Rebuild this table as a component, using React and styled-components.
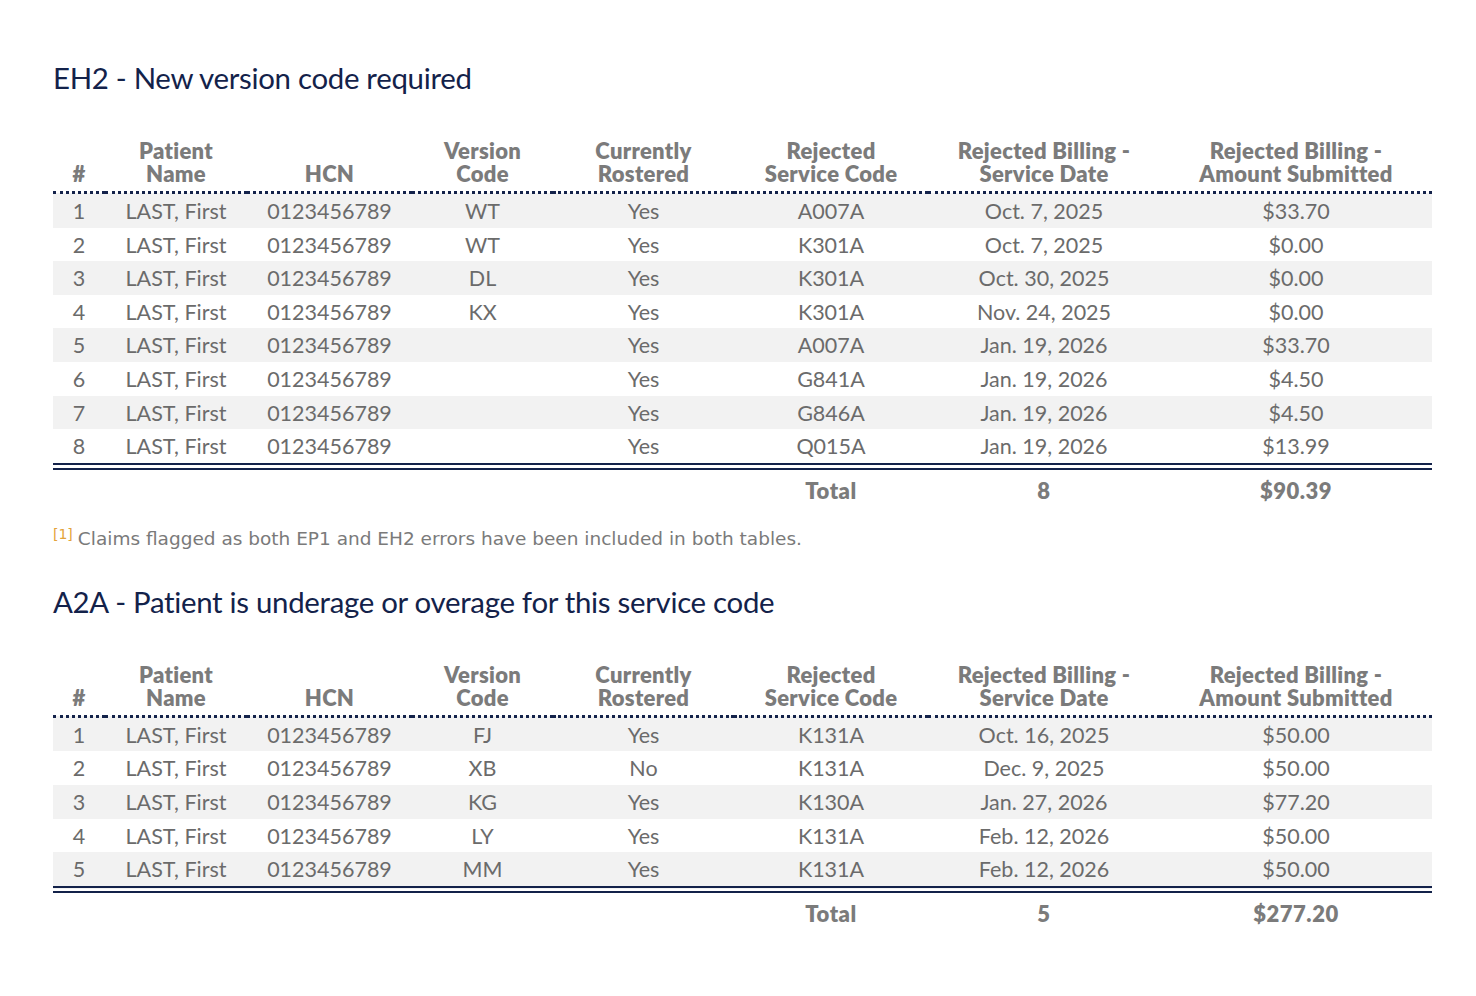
import React from "react";
import styled, { createGlobalStyle } from "styled-components";

const GlobalStyle = createGlobalStyle`
  html, body {
    margin: 0;
    padding: 0;
    background: #ffffff;
  }
  body {
    font-family: Lato, "Open Sans", sans-serif;
  }
`;

const Page = styled.div`
  width: 1476px;
  padding: 62px 44px 40px 53px;
  box-sizing: border-box;
`;

const Title = styled.h2`
  margin: 0;
  font-family: Lato, sans-serif;
  font-weight: 400;
  font-size: 29.4px;
  line-height: 32px;
  color: #13224a;
  letter-spacing: -0.3px;
`;

const Table = styled.table`
  width: 1379px;
  margin-top: 45px;
  border-collapse: collapse;
  table-layout: fixed;
  font-family: Lato, sans-serif;
  font-size: 21.5px;
`;

const Th = styled.th`
  vertical-align: bottom;
  padding: 0 2px 6px;
  font-weight: 800;
  font-size: 22px;
  line-height: 23px;
  letter-spacing: 0.3px;
  color: #7b7b7b;
  text-align: center;
  white-space: nowrap;
  border-bottom: 3px dotted #13224a;
`;

const Row = styled.tr`
  background: ${(p) => (p.$striped ? "#f2f2f2" : "#ffffff")};
`;

const Td = styled.td`
  padding: 5px 4px 3px;
  line-height: 25.6px;
  text-align: center;
  color: #6b6b6b;
  white-space: nowrap;
  border-bottom: ${(p) => (p.$last ? "7px double #13224a" : "none")};
`;

const TotalCell = styled.td`
  padding: 8px 4px 7px;
  line-height: 25px;
  text-align: center;
  font-weight: 800;
  font-size: 22px;
  letter-spacing: 0.5px;
  color: #7b7b7b;
`;

const Footnote = styled.p`
  margin: 14px 0 0 0;
  font-family: "DejaVu Sans", sans-serif;
  font-size: 18.5px;
  line-height: 20px;
  color: #7a7a7a;
`;

const Ref = styled.sup`
  color: #e3a33a;
  font-size: 14px;
  vertical-align: 6px;
  margin-right: 5px;
`;

const Section = styled.section`
  margin-top: ${(p) => p.$top || 0}px;
`;

const WIDTHS = [52, 142, 165, 141, 181, 194, 232, 272];

const HEADERS = [
  ["#"],
  ["Patient", "Name"],
  ["HCN"],
  ["Version", "Code"],
  ["Currently", "Rostered"],
  ["Rejected", "Service Code"],
  ["Rejected Billing -", "Service Date"],
  ["Rejected Billing -", "Amount Submitted"],
];

const EH2 = [
  ["WT", "Yes", "A007A", "Oct. 7, 2025", "$33.70"],
  ["WT", "Yes", "K301A", "Oct. 7, 2025", "$0.00"],
  ["DL", "Yes", "K301A", "Oct. 30, 2025", "$0.00"],
  ["KX", "Yes", "K301A", "Nov. 24, 2025", "$0.00"],
  ["", "Yes", "A007A", "Jan. 19, 2026", "$33.70"],
  ["", "Yes", "G841A", "Jan. 19, 2026", "$4.50"],
  ["", "Yes", "G846A", "Jan. 19, 2026", "$4.50"],
  ["", "Yes", "Q015A", "Jan. 19, 2026", "$13.99"],
];

const A2A = [
  ["FJ", "Yes", "K131A", "Oct. 16, 2025", "$50.00"],
  ["XB", "No", "K131A", "Dec. 9, 2025", "$50.00"],
  ["KG", "Yes", "K130A", "Jan. 27, 2026", "$77.20"],
  ["LY", "Yes", "K131A", "Feb. 12, 2026", "$50.00"],
  ["MM", "Yes", "K131A", "Feb. 12, 2026", "$50.00"],
];

const ClaimsTable = ({ rows, total }) => (
  <Table>
    <colgroup>
      {WIDTHS.map((w, i) => (
        <col key={i} style={{ width: w }} />
      ))}
    </colgroup>
    <thead>
      <tr>
        {HEADERS.map((lines, i) => (
          <Th key={i}>
            {lines[0]}
            {lines[1] && <br />}
            {lines[1]}
          </Th>
        ))}
      </tr>
    </thead>
    <tbody>
      {rows.map((r, i) => {
        const last = i === rows.length - 1;
        const cells = [i + 1, "LAST, First", "0123456789", ...r];
        return (
          <Row key={i} $striped={i % 2 === 0}>
            {cells.map((c, j) => (
              <Td key={j} $last={last}>
                {c}
              </Td>
            ))}
          </Row>
        );
      })}
      <tr>
        <TotalCell colSpan={5} />
        <TotalCell>Total</TotalCell>
        <TotalCell>{rows.length}</TotalCell>
        <TotalCell>{total}</TotalCell>
      </tr>
    </tbody>
  </Table>
);

export default function App() {
  return (
    <Page>
      <GlobalStyle />
      <Section>
        <Title>EH2 - New version code required</Title>
        <ClaimsTable rows={EH2} total="$90.39" />
        <Footnote>
          <Ref>[1]</Ref>Claims flagged as both EP1 and EH2 errors have been
          included in both tables.
        </Footnote>
      </Section>
      <Section $top={37}>
        <Title>A2A - Patient is underage or overage for this service code</Title>
        <ClaimsTable rows={A2A} total="$277.20" />
      </Section>
    </Page>
  );
}
